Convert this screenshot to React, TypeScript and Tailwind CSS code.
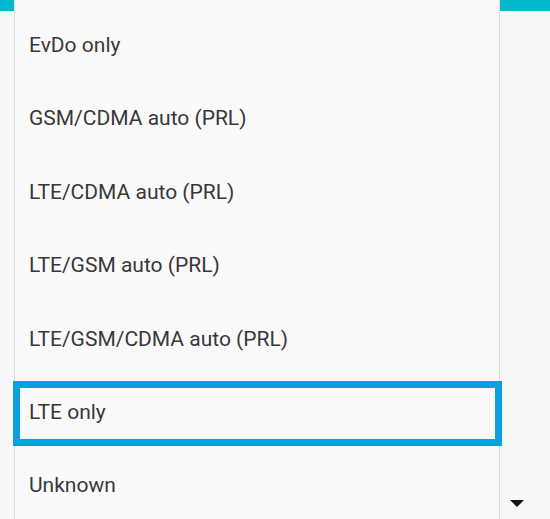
const options = [
  'EvDo only',
  'GSM/CDMA auto (PRL)',
  'LTE/CDMA auto (PRL)',
  'LTE/GSM auto (PRL)',
  'LTE/GSM/CDMA auto (PRL)',
  'LTE only',
  'Unknown',
];

export default function App() {
  return (
    <div className="relative h-[519px] w-[550px] overflow-hidden bg-[#f7f7f7] font-['Roboto',sans-serif]">
      <div className="h-[11px] bg-[#00b8cc]" />

      {/* dropdown arrow of the underlying spinner */}
      <div className="absolute left-[510px] top-[500px] h-0 w-0 border-x-[7px] border-t-[7px] border-x-transparent border-t-[#111]" />

      <div className="absolute left-[14px] top-0 h-[519px] w-[486px] border-x border-x-[#dcdcdc] bg-[#fafafa] pt-[9px]">
        {options.map((label) => (
          <div className="flex h-[73.4px] items-center pl-[14px] text-[21px] text-[#383838]" key={label}>
            {label}
          </div>
        ))}

        <div className="absolute left-[-2px] top-[381px] h-[65px] w-[489px] border-[7.5px] border-[#0aa0df]" />
      </div>
    </div>
  );
}
